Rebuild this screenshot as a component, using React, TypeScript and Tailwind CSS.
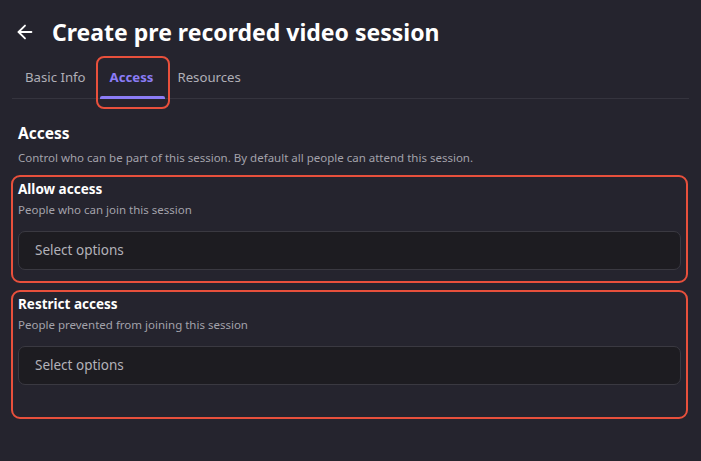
import React from "react";
import { ArrowLeft } from "lucide-react";

const font = { fontFamily: '"Noto Sans", "Open Sans", sans-serif' };

const tabs = ["Basic Info", "Access", "Resources"];

const AccessField: React.FC<{ title: string; hint: string; extra?: boolean }> = ({
  title,
  hint,
  extra,
}) => (
  <div
    className={`mx-[11px] rounded-[9px] border-2 border-[#e8503c] px-[5px] pt-[2px] ${
      extra ? "pb-[32px]" : "pb-[11px]"
    }`}
  >
    <div className="text-[13.5px] font-bold leading-[20px] text-white">{title}</div>
    <div className="mt-[3px] text-[11.5px] leading-[16px] text-[#a3a2ab]">{hint}</div>
    <div className="mt-[13px] flex h-[39px] items-center rounded-[7px] border border-[#3a3941] bg-[#1d1c21] px-4 text-[13.5px] text-[#b3b2b9]">
      Select options
    </div>
  </div>
);

export default function App() {
  return (
    <div className="h-[461px] w-[701px] overflow-hidden bg-[#25242e]" style={font}>
      {/* Header */}
      <div className="flex items-center pl-[14px] pt-[16px]">
        <ArrowLeft size={22} strokeWidth={2} className="text-white" />
        <h1 className="ml-[16px] text-[23px] font-bold leading-[32px] text-white">
          Create pre recorded video session
        </h1>
      </div>

      {/* Tabs */}
      <div className="mx-[12px] mt-[12px] flex border-b border-[#35343e] pl-[1px]">
        {tabs.map((t) => {
          const active = t === "Access";
          return (
            <div key={t} className="relative px-3 pb-[11px] pt-[7px] text-[13.2px] leading-[20px]">
              <span className={active ? "font-bold text-[#8b7cf6]" : "text-[#b0afb7]"}>{t}</span>
              {active && (
                <>
                  <span className="absolute bottom-[-1px] left-[2px] right-0 h-[3px] rounded-t-[2px] bg-[#8b7cf6]" />
                  <span className="absolute bottom-[-11px] left-[-2px] right-[-5px] top-[-4px] rounded-[8px] border-2 border-[#e8503c]" />
                </>
              )}
            </div>
          );
        })}
      </div>

      {/* Access section */}
      <div className="px-[18px] pt-[23px]">
        <h2 className="text-[15.5px] font-bold leading-[22px] text-white">Access</h2>
        <p className="mt-[6px] text-[11.5px] leading-[16px] text-[#a3a2ab]">
          Control who can be part of this session. By default all people can attend this session.
        </p>
      </div>

      <div className="mt-[9px] flex flex-col gap-[7px] pr-[2px]">
        <AccessField title="Allow access" hint="People who can join this session" />
        <AccessField
          title="Restrict access"
          hint="People prevented from joining this session"
          extra
        />
      </div>
    </div>
  );
}
